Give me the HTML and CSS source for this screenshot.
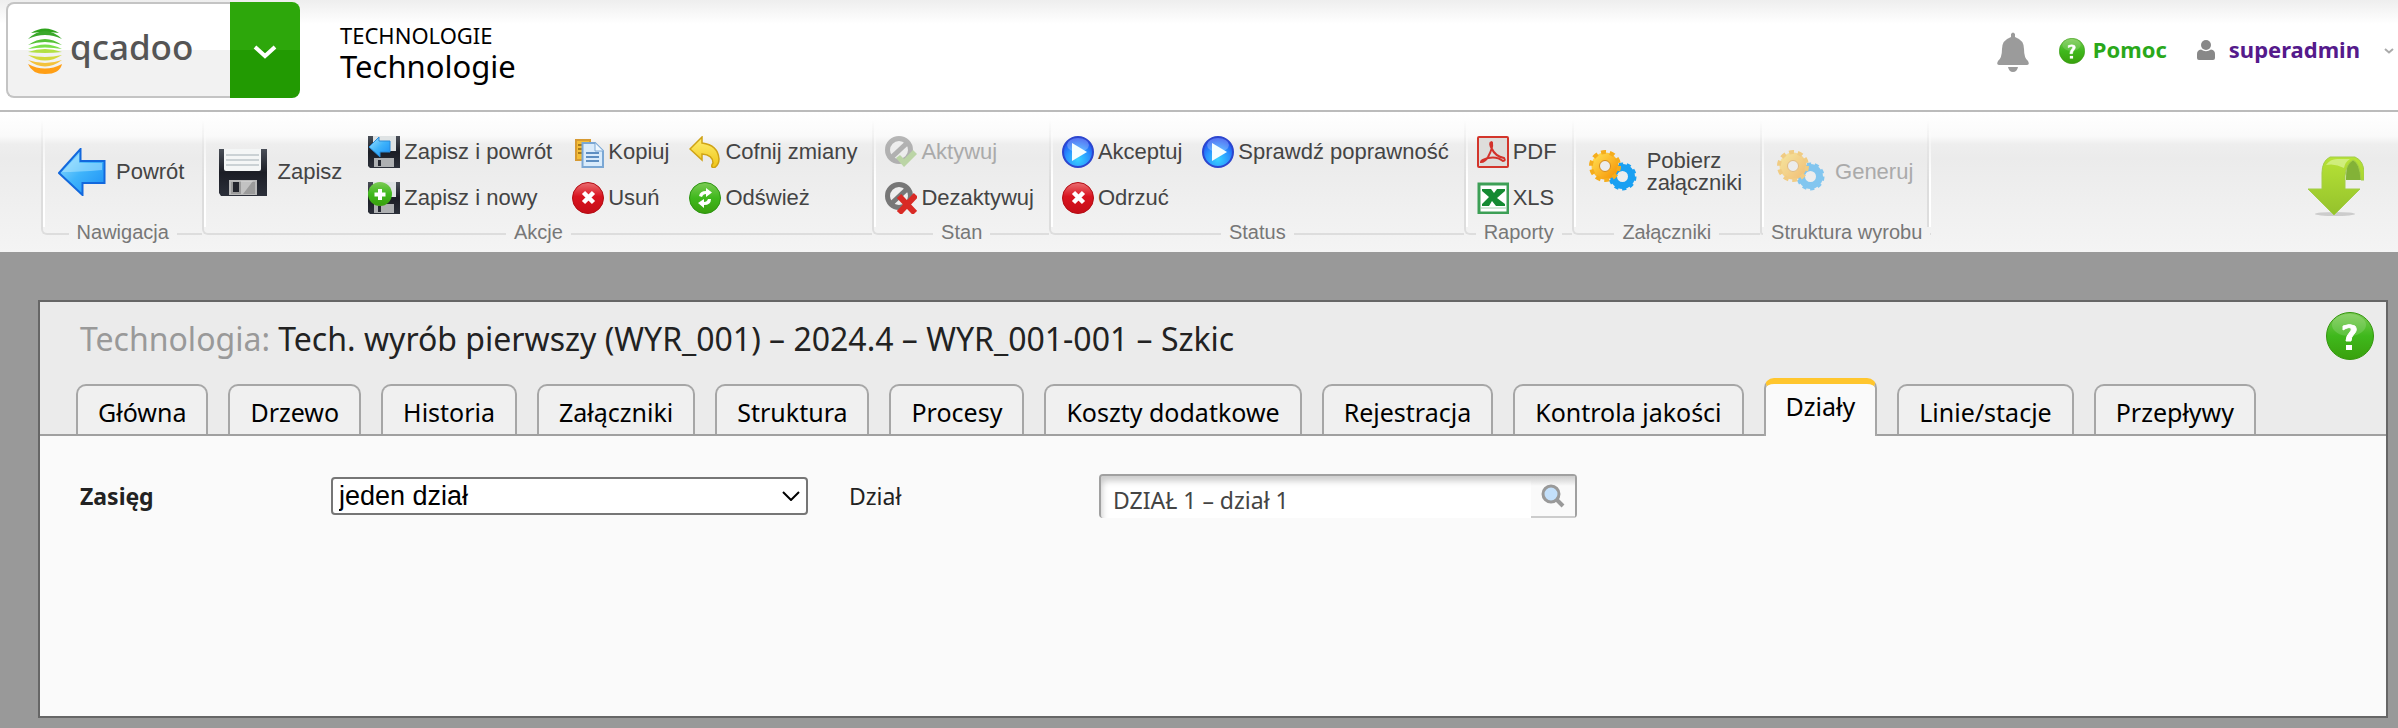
FILE: index.html
```html
<!DOCTYPE html>
<html lang="pl">
<head>
<meta charset="utf-8">
<title>Technologie</title>
<link rel="stylesheet" href="styles.css">
</head>
<body>
<svg class="defs" aria-hidden="true">
  <defs>
    <linearGradient id="blue" x1="0" y1="0" x2="1" y2="1"><stop offset="0" stop-color="#a5e4ff"/><stop offset=".5" stop-color="#3fb4fb"/><stop offset="1" stop-color="#1a8df5"/></linearGradient>
    <linearGradient id="green" x1="0" y1="0" x2="0" y2="1"><stop offset="0" stop-color="#7ccb55"/><stop offset=".5" stop-color="#3fb81c"/><stop offset="1" stop-color="#39a00d"/></linearGradient>
    <linearGradient id="red" x1="0" y1="0" x2="0" y2="1"><stop offset="0" stop-color="#ea6f72"/><stop offset=".45" stop-color="#d9141f"/><stop offset="1" stop-color="#c50d18"/></linearGradient>
    <radialGradient id="play" cx=".5" cy=".75" r=".7"><stop offset="0" stop-color="#35d2ff"/><stop offset=".55" stop-color="#2a93ff"/><stop offset="1" stop-color="#1f48ee"/></radialGradient>
    <linearGradient id="yellow" x1="0" y1="0" x2="0" y2="1"><stop offset="0" stop-color="#ffef70"/><stop offset="1" stop-color="#efc417"/></linearGradient>
    <linearGradient id="orange" x1="0" y1="0" x2="1" y2="1"><stop offset="0" stop-color="#ffd84a"/><stop offset="1" stop-color="#f79a0c"/></linearGradient>
    <linearGradient id="dark" x1="0" y1="0" x2="0" y2="1"><stop offset="0" stop-color="#4a4f58"/><stop offset=".5" stop-color="#1b1d25"/><stop offset="1" stop-color="#2c303a"/></linearGradient>
    <linearGradient id="lime" x1="0" y1="0" x2="0" y2="1"><stop offset="0" stop-color="#b7e236"/><stop offset="1" stop-color="#94c22c"/></linearGradient>
  </defs>
  <symbol id="arrow" viewBox="0 0 48 48"><path d="M1 25 22.500 1V13H46.500V35H24.500V47Z" fill="url(#blue)" stroke="#1268dd" stroke-width="2"/><path d="M4 24 21 6V15H44V22Q20 24 4 24Z" fill="#c4efff" opacity=".45"/></symbol>
  <symbol id="floppy" viewBox="0 0 48 48"><path d="M0 1H48V48H2L0 45Z" fill="url(#dark)"/><path d="M5 1H42V21Q42 23 40 23H7Q5 23 5 21Z" fill="#f4f6f6"/><path d="M7 7H40M7 12H40M7 17H40" stroke="#cbd2d5" stroke-width="2"/><path d="M10 32H38V47H10Z" fill="#b9b9b9"/><path d="M12 34H36V46H12Z" fill="#9b9b9b"/><path d="M14 34H20V44H14Z" fill="#23252d"/><path d="M22 33 34 33 24 46H22Z" fill="#dcdcdc" opacity=".6"/></symbol>
  <symbol id="minifloppy" viewBox="0 0 32 32"><path d="M0 0H32V32H2L0 30Z" fill="url(#dark)"/><path d="M5 0H28V15H5Z" fill="#dfe3e4"/><path d="M6 22H26V31H6Z" fill="#aeb0b2"/><path d="M10 24H13V30H10Z" fill="#262932"/></symbol>
  <symbol id="saveback" viewBox="0 0 32 32"><use href="#minifloppy" width="32" height="32"/><path d="M1 11 11 1V5H22V16H12V21Z" fill="url(#blue)" stroke="#2b8bd8"/></symbol>
  <symbol id="savenew" viewBox="0 0 32 32"><use href="#minifloppy" width="32" height="32"/><circle cx="12" cy="12" r="12" fill="url(#green)"/><path d="M12 7V18M6.500 12.500H17.500" stroke="#fff" stroke-width="4"/></symbol>
  <symbol id="copy" viewBox="0 0 32 32"><path d="M4 4H18V24H4Z" fill="#f4bd35" stroke="#d79a32" stroke-width="2"/><path d="M6 9H12M6 13H11M6 17H11" stroke="#a87918" stroke-width="2"/><path d="M10.500 7H23L31 15V31H10.500Z" fill="#d9ebfb" stroke="#7aa7d4" stroke-width="2"/><path d="M23 7V15H31" fill="#eff8ff" stroke="#7aa7d4"/><path d="M14 17H27M14 21H27M14 25H27" stroke="#5d8ec2" stroke-width="2"/></symbol>
  <symbol id="undo" viewBox="0 0 32 32"><path d="M1 13 13 1V7Q29 9 30 23Q30 29 25 32Q21 31 24 27Q24 19 13 18V24Z" fill="url(#yellow)" stroke="#cfa316" stroke-width="1.500"/></symbol>
  <symbol id="cancel" viewBox="0 0 32 32"><circle cx="16" cy="16" r="15.500" fill="url(#red)" stroke="#b30d14"/><path d="M11.500 10.500 21.500 20.500M21.500 10.500 11.500 20.500" stroke="#fff" stroke-width="4.500"/></symbol>
  <symbol id="refresh" viewBox="0 0 32 32"><circle cx="16" cy="16" r="15.500" fill="url(#green)" stroke="#2d9412"/><path d="M10 14Q11 9 17 9V6L23 10.500 17 15V12Q14 12 13 15ZM22 17Q22 23 15 23V26L9 21 15 17V20Q18 20 19 17Z" fill="#fff"/></symbol>
  <symbol id="activate" viewBox="0 0 32 32"><circle cx="14" cy="14" r="11.500" fill="#eee" stroke="#777" stroke-width="5"/><path d="M22 7 7 21" stroke="#777" stroke-width="5"/><path d="M11 22 15 19 19 23 28 14 32 18 19 31Z" fill="#8cbf62"/></symbol>
  <symbol id="deactivate" viewBox="0 0 32 32"><circle cx="14" cy="14" r="11.500" fill="#eee" stroke="#777" stroke-width="5"/><path d="M22 7 7 21" stroke="#777" stroke-width="5"/><path d="M14 14 30 31M31 13 14 31" stroke="#d92a25" stroke-width="6"/></symbol>
  <symbol id="accept" viewBox="0 0 32 32"><circle cx="16" cy="16" r="15" fill="url(#play)" stroke="#2c45ce" stroke-width="2"/><ellipse cx="16" cy="9" rx="11" ry="7" fill="#fff" opacity=".25"/><path d="M10 7 25 16 10 25Z" fill="#f4fdff"/></symbol>
  <symbol id="pdf" viewBox="0 0 32 32"><rect x="1" y="1" width="30" height="30" rx="1" fill="#dedddb" stroke="#d3352b" stroke-width="2"/><path d="M14 6Q12 8 15 13Q18 20 27 22Q29 25 26 25Q20 20 11 22Q4 24 4 26Q8 26 11 21Q16 12 15 7Q15 6 14 6" fill="none" stroke="#d3322b" stroke-width="2"/></symbol>
  <symbol id="xls" viewBox="0 0 32 32"><rect x="2" y="2" width="29" height="29" fill="#fff" stroke="#3d9f56" stroke-width="3"/><path d="M5 7H14L17 11 20 7H28V9L20 16 28 22V24H19L15 19 12 24H5V22L12 15 5 9Z" fill="#148a32"/><path d="M4 26H29" stroke="#a5cfaf" stroke-width="1"/></symbol>
  <symbol id="gears" viewBox="0 0 48 48"><circle cx="33.500" cy="28.500" r="9" fill="none" stroke="#1aa0f2" stroke-width="7"/><circle cx="33.500" cy="28.500" r="12" fill="none" stroke="#1aa0f2" stroke-width="4" stroke-dasharray="4 3.540"/><circle cx="16" cy="18" r="9.500" fill="none" stroke="url(#orange)" stroke-width="8"/><circle cx="16" cy="18" r="14" fill="none" stroke="#f5ad1d" stroke-width="4" stroke-dasharray="5 3.796"/><circle cx="16" cy="18" r="5.500" fill="none" stroke="#d58a18"/></symbol>
  <symbol id="help" viewBox="0 0 48 48"><circle cx="24" cy="24" r="23.500" fill="url(#green)" stroke="#35960f"/><ellipse cx="23" cy="13" rx="17" ry="11" fill="#fff" opacity=".15"/><path d="M17 18V14Q24 11 29 14Q32 18 28 22Q25 25 25 29H20Q20 24 24 20Q27 16 23 15.500Q20 16 17 18Z" fill="#fff" stroke="#fff"/><path d="M20 33H26V38H20Z" fill="#fff"/></symbol>
</svg>

<header class="top">
  <div class="brand">
    <a class="logo" href="#">
      <svg class="mark" viewBox="0 0 34 46" aria-hidden="true">
        <path d="M3 5Q17-4 31 5Q17 3 3 5Z" fill="#2ea31c"/>
        <path d="M0 11Q17-5 34 11Q17 3 0 11Z" fill="#3aa82a"/>
        <path d="M0 17Q17 5 34 17Q17 11 0 17Z" fill="#56c238"/>
        <path d="M0 21Q17 12 34 21Q17 18 0 21Z" fill="#7be04b"/>
        <path d="M0 24Q17 18 34 24Q17 26 0 24Z" fill="#b2e044"/>
        <path d="M0 27Q17 31 34 27Q17 38 0 27Z" fill="#d3d93a"/>
        <path d="M0 32Q17 38 34 32Q17 45 0 32Z" fill="#f3c23c"/>
        <path d="M0 36Q17 45 34 36Q32 46 17 46Q4 46 0 36Z" fill="#ff9f16"/>
      </svg>
      <span>qcadoo</span>
    </a>
    <button class="menu" aria-label="Menu"><svg viewBox="0 0 24 14"><path d="M2 2 12 11 22 2" fill="none" stroke="#fff" stroke-width="4"/></svg></button>
  </div>
  <div class="crumb"><div class="section">TECHNOLOGIE</div><h1>Technologie</h1></div>
  <nav class="user">
    <button class="bell" aria-label="Powiadomienia"><svg viewBox="0 0 32 40"><path d="M14 2Q16-1 18 2V5Q27 8 27 17Q27 26 31 29Q33 33 30 33H2Q-1 33 1 29Q5 26 5 17Q5 8 14 5ZM11 35H21Q20 40 16 40Q12 40 11 35Z" fill="#9b9b9b"/></svg></button>
    <a class="pomoc" href="#"><svg><use href="#help"/></svg>Pomoc</a>
    <a class="account" href="#"><svg viewBox="0 0 18 20"><circle cx="9" cy="5" r="5" fill="#888"/><path d="M0 18V14Q0 10 4 9.500Q9 13 14 9.500Q18 10 18 14V18Q18 20 16 20H2Q0 20 0 18Z" fill="#888"/></svg>superadmin</a>
    <button class="more" aria-label="Więcej"><svg viewBox="0 0 10 6"><path d="M1 1 5 4.500 9 1" fill="none" stroke="#aaa" stroke-width="2"/></svg></button>
  </nav>
</header>

<div class="ribbon">
  <section class="group big"><div class="tools"><button class="large"><svg><use href="#arrow"/></svg>Powrót</button></div><div class="caption"><span>Nawigacja</span></div></section>
  <section class="group mixed"><div class="tools"><button class="large"><svg><use href="#floppy"/></svg>Zapisz</button>
    <div class="col"><button><svg><use href="#saveback"/></svg>Zapisz i powrót</button><button><svg><use href="#savenew"/></svg>Zapisz i nowy</button></div>
    <div class="col"><button><svg><use href="#copy"/></svg>Kopiuj</button><button><svg><use href="#cancel"/></svg>Usuń</button></div>
    <div class="col"><button><svg><use href="#undo"/></svg>Cofnij zmiany</button><button><svg><use href="#refresh"/></svg>Odśwież</button></div></div>
    <div class="caption"><span>Akcje</span></div></section>
  <section class="group"><div class="tools"><div class="col"><button disabled><svg><use href="#activate"/></svg>Aktywuj</button><button><svg><use href="#deactivate"/></svg>Dezaktywuj</button></div></div><div class="caption"><span>Stan</span></div></section>
  <section class="group"><div class="tools"><div class="col"><button><svg><use href="#accept"/></svg>Akceptuj</button><button><svg><use href="#cancel"/></svg>Odrzuć</button></div><div class="col"><button><svg><use href="#accept"/></svg>Sprawdź poprawność</button></div></div><div class="caption"><span>Status</span></div></section>
  <section class="group"><div class="tools"><div class="col"><button><svg><use href="#pdf"/></svg>PDF</button><button><svg><use href="#xls"/></svg>XLS</button></div></div><div class="caption"><span>Raporty</span></div></section>
  <section class="group big"><div class="tools"><button class="large"><svg><use href="#gears"/></svg>Pobierz<br>załączniki</button></div><div class="caption"><span>Załączniki</span></div></section>
  <section class="group big"><div class="tools"><button class="large" disabled><svg><use href="#gears"/></svg>Generuj</button></div><div class="caption"><span>Struktura wyrobu</span></div></section>
  <button class="expand" aria-label="Rozwiń"><svg viewBox="0 0 56 60"><ellipse cx="27" cy="58" rx="20" ry="2" fill="#ccc"/><path d="M38 24Q38 3 44 1Q55 4 56 24Z" fill="#83b237"/><path d="M22 1H47Q56 5 56 17V24H53Q52 7 45 4Q38 8 37 20V33H52L26 59 0 33H14V17Q14 5 22 1Z" fill="url(#lime)" stroke="#a3cd49"/><path d="M18 9Q22 3 29 3H42Q37 6 36 12Q27 7 18 9Z" fill="#dcf49b" opacity=".7"/></svg></button>
</div>

<main class="panel">
  <div class="head">
    <h2><span>Technologia:</span> Tech. wyrób pierwszy (WYR_001) – 2024.4 – WYR_001-001 – Szkic</h2>
    <button class="helpbtn" aria-label="Pomoc"><svg><use href="#help"/></svg></button>
    <nav class="tabs">
      <a href="#">Główna</a><a href="#">Drzewo</a><a href="#">Historia</a><a href="#">Załączniki</a><a href="#">Struktura</a><a href="#">Procesy</a><a href="#">Koszty dodatkowe</a><a href="#">Rejestracja</a><a href="#">Kontrola jakości</a><a class="active" href="#" aria-current="page">Działy</a><a href="#">Linie/stacje</a><a href="#">Przepływy</a>
    </nav>
  </div>
  <form class="form">
    <label class="strong" for="range">Zasięg</label>
    <div class="select"><select id="range"><option>jeden dział</option></select><svg viewBox="0 0 18 10"><path d="M1 1 9 9 17 1" fill="none" stroke="#000" stroke-width="2"/></svg></div>
    <label for="division">Dział</label>
    <div class="lookup"><input id="division" type="text" value="DZIAŁ 1 – dział 1"><button type="button" aria-label="Szukaj"><svg viewBox="0 0 24 24"><path d="M15 15 22 22" stroke="#999" stroke-width="4"/><circle cx="10" cy="10" r="8" fill="#c3e0fb" stroke="#999" stroke-width="3"/></svg></button></div>
  </form>
</main>
</body>
</html>
```

FILE: styles.css
```css
* { box-sizing: border-box; }
body {
  margin: 0;
  min-height: 100vh;
  display: flex;
  flex-direction: column;
  background: #999;
  color: #000;
  font-family: "Noto Sans", "Open Sans", sans-serif;
  font-size: 22px;
}
button {
  font: inherit;
  color: inherit;
  background: none;
  border: 0;
  padding: 0;
  text-align: left;
}
a { text-decoration: none; color: inherit; }
svg { display: block; flex: none; }
h1, h2 { margin: 0; font-weight: 400; }
.defs { position: absolute; width: 0; height: 0; }

.top {
  display: flex;
  align-items: flex-start;
  height: 112px;
  padding: 2px 4px 0 6px;
  border-bottom: 2px solid #bbb;
  background: linear-gradient(#eee, #fff 24px);
}
.brand { display: flex; width: 294px; height: 96px; }
.logo {
  flex: 1;
  display: flex;
  align-items: center;
  gap: 8px;
  padding: 0 0 6px 20px;
  border: 2px solid #c4c4c4;
  border-right: 0;
  border-radius: 8px 0 0 8px;
  background: linear-gradient(#fff 50%, #f2f2f2 50%);
  color: #555;
  font-size: 35px;
  font-weight: 500;
  line-height: 40px;
}
.mark { width: 34px; height: 46px; margin-top: 8px; }
.menu {
  width: 70px;
  display: grid;
  place-items: center;
  border-radius: 0 8px 8px 0;
  background: linear-gradient(#2da70b 50%, #229a02 50%);
}
.menu svg { width: 24px; height: 14px; margin-top: 4px; }
.crumb { padding: 18px 0 0 40px; }
.section { font-size: 22px; line-height: 30px; }
h1 { font-size: 31px; line-height: 32px; }
.user {
  display: flex;
  align-items: center;
  margin-left: auto;
  height: 94px;
  font-weight: 700;
  font-size: 22px;
}
.bell { margin-top: 6px; }
.bell svg { width: 32px; height: 40px; }
.pomoc, .account { display: flex; align-items: center; }
.pomoc { margin-left: 30px; gap: 8px; color: #2aa81a; }
.pomoc svg { width: 26px; height: 26px; margin-top: 4px; }
.account { margin-left: 30px; gap: 14px; color: #551a8b; }
.account svg { width: 18px; height: 20px; margin-top: 2px; }
.more { margin-left: 24px; }
.more svg { width: 10px; height: 6px; margin-top: 4px; }

.ribbon {
  display: flex;
  padding: 0 34px 7px 41px;
  background: linear-gradient(#fff, #fafafa 24px, #eee 32px, #ebebeb 46px, #f4f4f4);
  color: #444;
  font-family: "Liberation Sans", Arial, sans-serif;
  line-height: 22px;
}
.group { position: relative; display: flex; flex-direction: column; }
.group::before, .group:last-of-type::after {
  content: "";
  position: absolute;
  left: 0;
  top: 8px;
  bottom: 18px;
  width: 4px;
  background: linear-gradient(to right, #ddd 2px, #fff 2px);
  -webkit-mask-image: linear-gradient(transparent, #000 60px);
  mask-image: linear-gradient(transparent, #000 60px);
}
.group:last-of-type::after { left: auto; right: 0; }
.tools {
  display: flex;
  gap: 20px;
  height: 107px;
  padding: 24px 15px 5px 13px;
}
.big .tools { padding: 24px 18px 5px 17px; }
.mixed .tools { padding-left: 17px; }
.mixed .large { margin-right: 6px; }
.col { display: flex; flex-direction: column; gap: 14px; }
.col button { display: flex; align-items: center; gap: 4px; height: 32px; white-space: nowrap; }
.col svg { width: 32px; height: 32px; }
.large { display: flex; align-items: center; gap: 10px; height: 72px; }
.large svg { width: 48px; height: 48px; }
button:disabled { color: #aaa; }
button:disabled svg { opacity: .5; }
.caption { display: flex; align-items: flex-start; font-size: 20px; line-height: 26px; color: #777; }
.caption span { padding: 0 8px; white-space: nowrap; }
.caption::before, .caption::after {
  content: "";
  flex: 1;
  height: 14px;
  border-bottom: 2px solid #ddd;
}
.caption::before { border-left: 2px solid #ddd; border-bottom-left-radius: 6px; }
.expand { margin: 44px 0 0 auto; align-self: flex-start; }
.expand svg { width: 56px; height: 60px; }

.panel {
  flex: 1;
  margin: 48px 10px 10px 38px;
  border: 2px solid #666;
  background: #fafafa;
}
.head {
  display: grid;
  grid-template-columns: 1fr auto;
  border-bottom: 2px solid #a0a0a0;
  background: #ebebeb;
}
h2 { padding: 14px 0 0 40px; font-size: 32px; line-height: 46px; color: #222; }
h2 span { color: #999; }
.helpbtn { margin: 10px 12px 0 0; align-self: start; }
.helpbtn svg { width: 48px; height: 48px; }
.tabs {
  grid-column: 1 / -1;
  display: flex;
  align-items: flex-end;
  gap: 20px;
  padding: 16px 36px 0;
  margin-bottom: -2px;
  font-size: 25px;
  line-height: 48px;
}
.tabs a {
  height: 50px;
  margin-bottom: 2px;
  padding: 2px 20px 0;
  border: 2px solid #a6a6a6;
  border-bottom: 0;
  border-radius: 10px 10px 0 0;
  background: #f0f0f0;
  white-space: nowrap;
}
.tabs .active {
  height: 58px;
  margin-bottom: 0;
  padding-top: 0;
  border-top: 6px solid #ffc62e;
  background: #fafafa;
  line-height: 44px;
}
.form {
  display: grid;
  grid-template-columns: 251px 477px 291px 478px;
  align-items: center;
  padding: 38px 40px;
  color: #222;
  font-size: 23px;
}
.form > label:nth-of-type(2) { padding-left: 41px; }
.strong { font-weight: 700; }
.select { position: relative; }
select {
  appearance: none;
  display: block;
  width: 100%;
  height: 38px;
  padding: 0 36px 0 6px;
  border: 2px solid #767676;
  border-radius: 4px;
  background: #fff;
  color: #000;
  font: 27px/34px "Liberation Sans", Arial, sans-serif;
}
.select svg { position: absolute; right: 8px; top: 14px; width: 18px; height: 10px; }
.lookup {
  display: flex;
  height: 44px;
  border: 2px solid #a0a0a0;
  border-bottom: 0;
  border-radius: 4px;
  background: #fff;
  box-shadow: inset 4px 8px 6px -3px #ccc;
}
.lookup input {
  flex: 1;
  min-width: 0;
  padding: 6px 0 0 12px;
  border: 0;
  background: none;
  color: #444;
  font: inherit;
}
.lookup button {
  width: 44px;
  display: grid;
  place-items: center;
  border-bottom: 2px solid #ccc;
  background: linear-gradient(#ccc, #fafafa 10px);
}
.lookup svg { width: 24px; height: 24px; }
```
